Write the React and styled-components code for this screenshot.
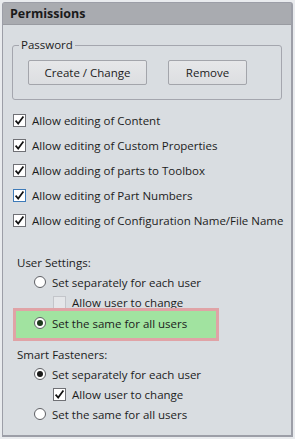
import React from "react";
import styled, { createGlobalStyle } from "styled-components";

const Global = createGlobalStyle`
  html, body { margin: 0; padding: 0; background: #e9ebee; }
  body { font-family: "Open Sans", "Noto Sans", sans-serif; font-size: 11.5px; color: #1c1c1c; }
  * { box-sizing: border-box; }
`;

const Panel = styled.div`
  margin: 2px 0 0 2px;
  width: 291px;
  height: 435px;
  border: 1px solid #9c9ea7;
  border-right-width: 2px;
  border-bottom-width: 2px;
  border-radius: 3px 3px 0 0;
  background: #d9dde1;
  display: flex;
  flex-direction: column;
  white-space: nowrap;
`;

const Header = styled.div`
  height: 22px;
  flex: none;
  background: #a9abb0;
  border-bottom: 1px solid #999ba1;
  padding-left: 7px;
  display: flex;
  align-items: center;
  font-weight: 700;
  font-size: 12.5px;
  color: #1a1a1a;
`;

const Body = styled.div`
  padding: 12px 9px 0 9px;
  display: flex;
  flex-direction: column;
`;

const Group = styled.fieldset`
  margin: 0;
  border: 1px solid #a4a6ae;
  border-radius: 3px;
  padding: 7px 15px 14px 15px;
  display: flex;
  gap: 21px;
`;

const Legend = styled.legend`
  padding: 0 2px;
  margin-left: -9px;
  line-height: 16px;
`;

const Button = styled.button`
  height: 25px;
  width: ${(p) => p.$w}px;
  font-family: inherit;
  font-size: 11.5px;
  color: #1c1c1c;
  background: linear-gradient(#e6e7e9, #dcdee1);
  border: 1px solid #a3a5ab;
  border-radius: 2px;
  padding: 0;
`;

const CheckList = styled.div`
  margin: 8px 0 0 1px;
  display: flex;
  flex-direction: column;
`;

const CheckRow = styled.div`
  height: ${(p) => p.$h || 25}px;
  display: flex;
  align-items: center;
  gap: 6px;
  padding-left: ${(p) => p.$indent || 0}px;
`;

const Box = styled.span`
  width: 13px;
  height: 13px;
  flex: none;
  border: 1px solid ${(p) => (p.$focus ? "#3d7ab8" : p.$disabled ? "#c3c5ca" : "#6f7075")};
  background: ${(p) => (p.$disabled ? "#e4e6e9" : "#ffffff")};
  display: flex;
  align-items: center;
  justify-content: center;
`;

const Section = styled.div`
  margin-top: ${(p) => p.$mt}px;
  display: flex;
  flex-direction: column;
`;

const Label = styled.div`
  height: 20px;
  display: flex;
  align-items: center;
  padding-left: 5px;
`;

const Circle = styled.span`
  width: 12px;
  height: 12px;
  flex: none;
  border-radius: 50%;
  border: 1px solid #5e5f64;
  background: #ffffff;
  display: flex;
  align-items: center;
  justify-content: center;
  &::after {
    content: "";
    display: ${(p) => (p.$on ? "block" : "none")};
    width: 6px;
    height: 6px;
    border-radius: 50%;
    background: ${(p) => p.$dot || "#1a1a1a"};
  }
`;

const RadioRow = styled.div`
  height: 20px;
  display: flex;
  align-items: center;
  gap: 6px;
  padding-left: 22px;
`;

const Highlight = styled.div`
  margin: -4px 0 0 1px;
  width: 206px;
  height: 33px;
  border: 3px solid #e0a3a6;
  background: #a1e3a0;
  display: flex;
  align-items: center;
  gap: 6px;
  padding: 0 0 3px 18px;
`;

const Check = () => (
  <svg width="11" height="11" viewBox="0 0 11 11">
    <path d="M1.6 5.6 L4.2 8.6 L9.4 1.6" fill="none" stroke="#111" strokeWidth="1.7" />
  </svg>
);

const Checkbox = ({ checked, focus, disabled, children, indent, h }) => (
  <CheckRow $indent={indent} $h={h}>
    <Box $focus={focus} $disabled={disabled}>{checked && <Check />}</Box>
    <span>{children}</span>
  </CheckRow>
);

const Radio = ({ on, children }) => (
  <RadioRow>
    <Circle $on={on} />
    <span>{children}</span>
  </RadioRow>
);

export default function App() {
  return (
    <>
      <Global />
      <Panel>
        <Header>Permissions</Header>
        <Body>
          <Group>
            <Legend>Password</Legend>
            <Button $w={119}>Create / Change</Button>
            <Button $w={79}>Remove</Button>
          </Group>
          <CheckList>
            <Checkbox checked>Allow editing of Content</Checkbox>
            <Checkbox checked>Allow editing of Custom Properties</Checkbox>
            <Checkbox checked>Allow adding of parts to Toolbox</Checkbox>
            <Checkbox checked focus>Allow editing of Part Numbers</Checkbox>
            <Checkbox checked>Allow editing of Configuration Name/File Name</Checkbox>
          </CheckList>
          <Section $mt={19}>
            <Label>User Settings:</Label>
            <Radio>Set separately for each user</Radio>
            <Checkbox disabled indent={41} h={20}>Allow user to change</Checkbox>
            <Highlight>
              <Circle $on $dot="#1d3b1d" />
              <span>Set the same for all users</span>
            </Highlight>
          </Section>
          <Section $mt={3}>
            <Label>Smart Fasteners:</Label>
            <Radio on>Set separately for each user</Radio>
            <Checkbox checked indent={41} h={20}>Allow user to change</Checkbox>
            <Radio>Set the same for all users</Radio>
          </Section>
        </Body>
      </Panel>
    </>
  );
}
